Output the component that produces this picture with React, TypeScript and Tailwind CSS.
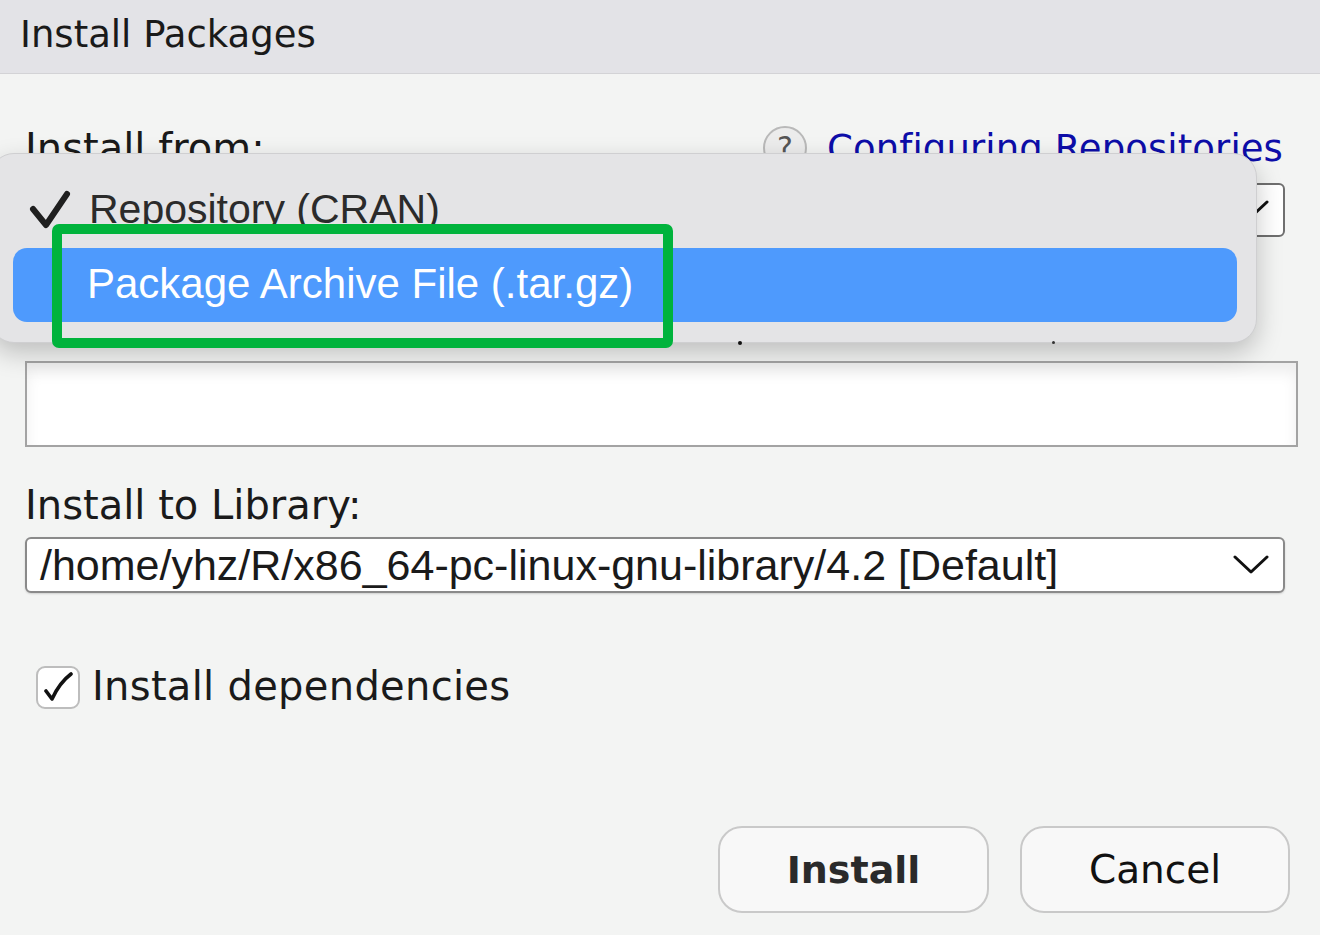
const ui = { fontFamily: '"DejaVu Sans", "Liberation Sans", sans-serif' };
const mac = { fontFamily: '"Liberation Sans", Arial, sans-serif' };

function MenuCheck() {
  return (
    <svg width="44" height="42" viewBox="0 0 44 42" className="shrink-0">
      <path d="M4 19 L17 35 L38 4" fill="none" stroke="#1f1f1f" strokeWidth="6" strokeLinecap="round" strokeLinejoin="round" />
    </svg>
  );
}

function Chevron({ className = "" }: { className?: string }) {
  return (
    <svg width="36" height="20" viewBox="0 0 36 20" className={className}>
      <path d="M2 2 L18 17 L34 2" fill="none" stroke="#111" strokeWidth="3" strokeLinecap="round" strokeLinejoin="round" />
    </svg>
  );
}

export default function App() {
  return (
    <div className="relative w-[1320px] h-[935px] overflow-hidden bg-[#f3f4f3] text-[#1a1a1a]" style={ui}>
      {/* Title bar */}
      <div className="h-[74px] bg-[#e3e3e7] border-b border-[#d3d3d6] flex items-center pl-[20px]">
        <h1 className="text-[37px] leading-none pb-[4px]">Install Packages</h1>
      </div>

      <div className="flex flex-col pl-[25px]">
        {/* Install from row */}
        <div className="mt-[54px] h-[40px] flex items-center justify-between pr-[37px]">
          <span className="text-[40px] leading-none">Install from:</span>
          <div className="flex items-center gap-[20px]">
            <div className="w-[44px] h-[44px] rounded-full border-2 border-[#b9b9b9] bg-[#ececec] flex items-center justify-center text-[30px] text-[#555] leading-none">
              ?
            </div>
            <span className="text-[37px] leading-none text-[#0d0da8] tracking-[0.1px]">Configuring Repositories</span>
          </div>
        </div>

        {/* Source select (covered by menu) */}
        <div className="mt-[15px] mr-[35px] h-[54px] rounded-[6px] border-2 border-[#6f6f6f] bg-white flex items-center justify-end pr-[14px]">
          <Chevron />
        </div>

        {/* Package path input */}
        <div className="mt-[124px] mr-[22px] h-[86px] border-2 border-[#a3a3a3] bg-white shadow-[inset_0_10px_14px_rgba(0,0,0,0.07)]" />

        {/* Install to library */}
        <div className="mt-[38px] h-[40px] flex items-center">
          <span className="text-[40px] leading-none">Install to Library:</span>
        </div>
        <div className="mt-[12px] mr-[35px] h-[56px] rounded-[6px] border-2 border-[#8a8a8a] bg-white flex items-center justify-between pl-[13px] pr-[14px] shadow-[0_1px_2px_rgba(0,0,0,0.15)]">
          <span className="text-[43px] leading-none" style={mac}>
            /home/yhz/R/x86_64-pc-linux-gnu-library/4.2 [Default]
          </span>
          <Chevron />
        </div>

        {/* Dependencies checkbox */}
        <div className="mt-[72px] h-[44px] flex items-center gap-[12px] pl-[11px]">
          <div className="w-[44px] h-[43px] rounded-[9px] border-2 border-[#bdbdbd] bg-white flex items-center justify-center">
            <svg width="30" height="30" viewBox="0 0 30 30">
              <path d="M3 19 L9 27 C14 16 20 8 28 2" fill="none" stroke="#111" strokeWidth="3.6" strokeLinecap="round" strokeLinejoin="round" />
            </svg>
          </div>
          <span className="text-[40px] leading-none pb-[2px] tracking-[0.3px]">Install dependencies</span>
        </div>

        {/* Buttons */}
        <div className="mt-[117px] flex justify-end gap-[31px] pr-[30px]">
          <button className="w-[271px] h-[87px] rounded-[24px] border-2 border-[#c9c9c9] bg-[#f8f8f8] text-[38px] font-bold text-[#2a2a2a] leading-none">
            Install
          </button>
          <button className="w-[270px] h-[87px] rounded-[24px] border-2 border-[#c9c9c9] bg-[#f8f8f8] text-[39px] text-[#111] leading-none">
            Cancel
          </button>
        </div>
      </div>

      {/* Open dropdown menu */}
      <div
        className="absolute left-[-10px] top-[153px] w-[1267px] h-[190px] rounded-[24px] bg-[#e4e4e6] border border-[#cfcfd1] shadow-[0_10px_26px_rgba(0,0,0,0.22)] pt-[20px] pl-[22px] pr-[19px]"
        style={mac}
      >
        <div className="h-[74px] flex items-center pl-[16px] gap-[16px]">
          <MenuCheck />
          <span className="text-[41px] leading-none text-[#2b2b2b] pb-[4px]">Repository (CRAN)</span>
        </div>
        <div className="h-[74px] rounded-[14px] bg-[#4e9afd] flex items-center pl-[74px]">
          <span className="text-[42px] leading-none text-white pb-[2px]">Package Archive File (.tar.gz)</span>
        </div>
      </div>

      {/* Bits of the hidden label peeking below the menu */}
      <span className="absolute left-[738px] top-[341px] w-[4px] h-[4px] rounded-full bg-[#111]" />
      <span className="absolute left-[1052px] top-[341px] w-[3px] h-[3px] rounded-full bg-[#333]" />

      {/* Green highlight annotation */}
      <div className="absolute left-[52px] top-[224px] w-[621px] h-[124px] rounded-[7px] border-[10px] border-[#00b33c]" />
    </div>
  );
}
